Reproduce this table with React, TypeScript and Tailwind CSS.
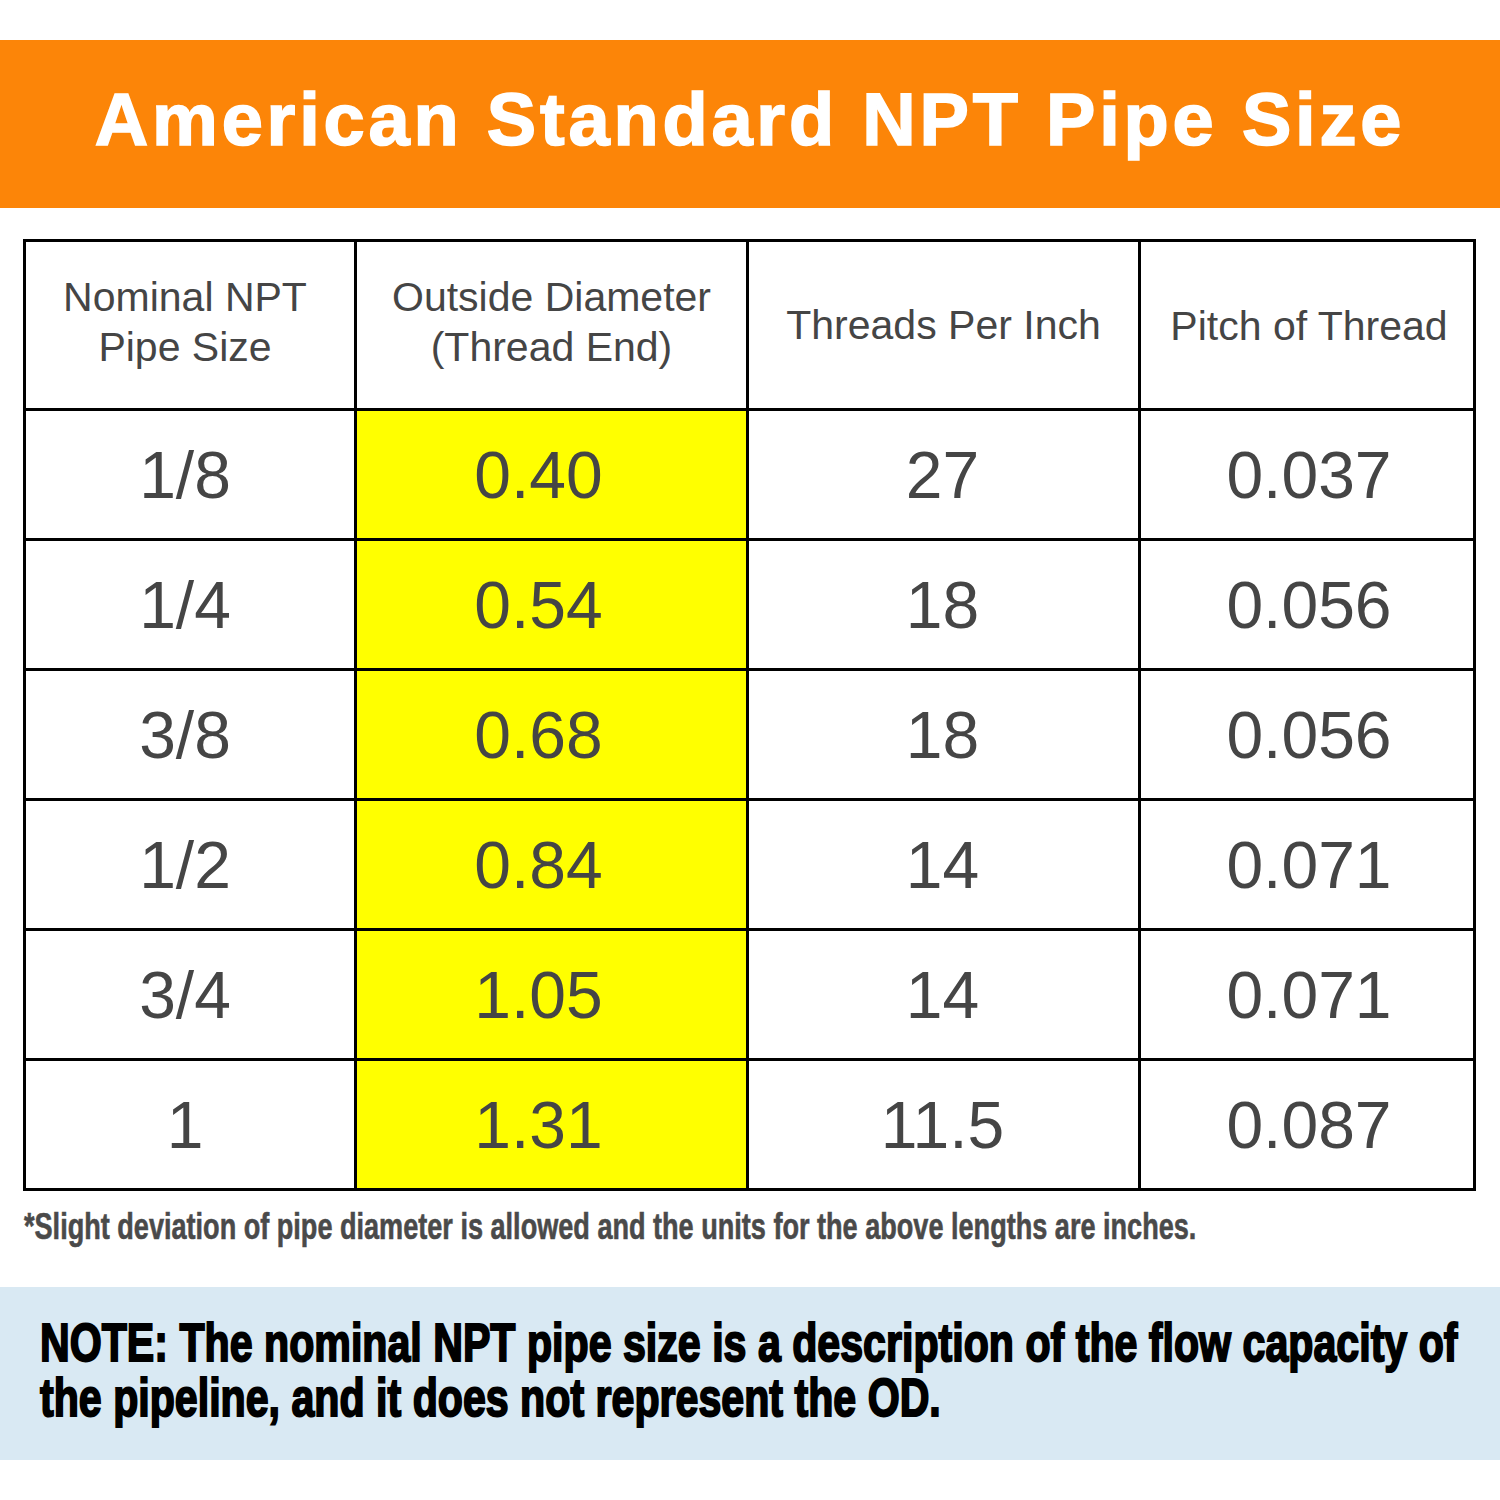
import React from "react";

const rows = [
  { size: "1/8", od: "0.40", tpi: "27", pitch: "0.037" },
  { size: "1/4", od: "0.54", tpi: "18", pitch: "0.056" },
  { size: "3/8", od: "0.68", tpi: "18", pitch: "0.056" },
  { size: "1/2", od: "0.84", tpi: "14", pitch: "0.071" },
  { size: "3/4", od: "1.05", tpi: "14", pitch: "0.071" },
  { size: "1", od: "1.31", tpi: "11.5", pitch: "0.087" },
];

const sans = "font-['Liberation_Sans',Arial,sans-serif]";

function HeadCell({ children, shift }: { children: React.ReactNode; shift?: string }) {
  return (
    <div className={`bg-white h-[166px] flex items-center justify-center text-center text-[41px] leading-[50px] text-[#454545] ${shift ?? ""}`}>
      <div>{children}</div>
    </div>
  );
}

function Cell({ value, yellow, pad }: { value: string; yellow?: boolean; pad?: string }) {
  return (
    <div
      className={`h-[127px] flex items-center justify-center text-[66px] leading-none text-[#454545] ${
        yellow ? "bg-[#ffff00]" : "bg-white"
      } ${pad ?? ""}`}
    >
      {value}
    </div>
  );
}

export default function App() {
  return (
    <div className={`w-[1500px] h-[1500px] bg-white overflow-hidden ${sans}`}>
      <div className="h-[40px]" />
      <div className="h-[168px] bg-[#fc8508] flex items-center justify-center">
        <h1 className="text-white font-bold text-[74px] leading-none tracking-[3.8px] -mt-[8px] [-webkit-text-stroke:1.6px_#fff]">
          American Standard NPT Pipe Size
        </h1>
      </div>

      <div className="mt-[31px] ml-[23px] w-[1453px] bg-black p-[3px] grid grid-cols-[328px_389px_389px_332px] gap-[3px]">
        <HeadCell shift="pb-[6px] pr-[10px]">
          Nominal NPT
          <br />
          Pipe Size
        </HeadCell>
        <HeadCell shift="pb-[6px]">
          Outside Diameter
          <br />
          (Thread End)
        </HeadCell>
        <HeadCell>Threads Per Inch</HeadCell>
        <HeadCell shift="pt-[2px] pl-[4px]">Pitch of Thread</HeadCell>
        {rows.map((r) => (
          <React.Fragment key={r.size}>
            <Cell value={r.size} pad="pr-[10px]" />
            <Cell value={r.od} yellow pad="pr-[26px]" />
            <Cell value={r.tpi} pad="pr-[2px]" />
            <Cell value={r.pitch} pad="pl-[4px]" />
          </React.Fragment>
        ))}
      </div>

      <div className="mt-[16px] ml-[24px] h-[40px]">
        <span className="block whitespace-nowrap origin-left scale-x-[0.732] font-bold text-[37px] leading-[40px] text-[#4a4a4a] [-webkit-text-stroke:0.6px_#4a4a4a]">
          *Slight deviation of pipe diameter is allowed and the units for the above lengths are inches.
        </span>
      </div>

      <div className="mt-[40px] h-[173px] bg-[#d9e9f3] pt-[28px] pl-[40px]">
        <span className="block whitespace-nowrap origin-left scale-x-[0.762] font-bold text-[54px] leading-[55px] text-black [-webkit-text-stroke:2px_#000]">
          NOTE: The nominal NPT pipe size is a description of the flow capacity of
        </span>
        <span className="block whitespace-nowrap origin-left scale-x-[0.762] font-bold text-[54px] leading-[55px] text-black [-webkit-text-stroke:2px_#000]">
          the pipeline, and it does not represent the OD.
        </span>
      </div>
    </div>
  );
}
